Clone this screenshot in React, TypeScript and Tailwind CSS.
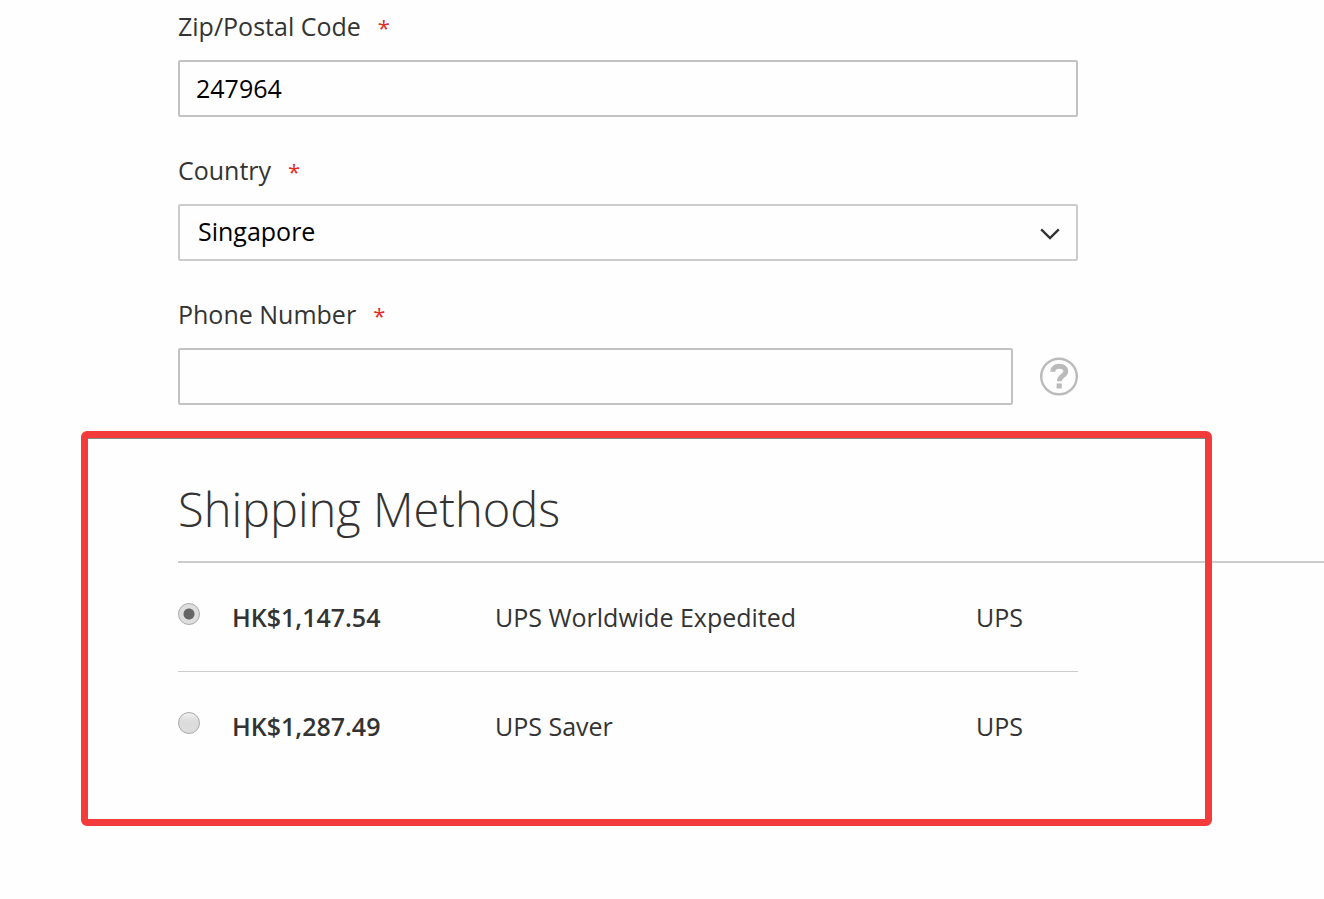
import { useState } from 'react'
import type { ReactNode } from 'react'

interface ShippingMethod {
  id: string
  price: string
  method: string
  carrier: string
}

const METHODS: ShippingMethod[] = [
  { id: 'ups-expedited', price: 'HK$1,147.54', method: 'UPS Worldwide Expedited', carrier: 'UPS' },
  { id: 'ups-saver', price: 'HK$1,287.49', method: 'UPS Saver', carrier: 'UPS' },
]

const COUNTRIES = ['Singapore', 'Hong Kong', 'Malaysia']

const CONTROL = 'block h-[57px] w-full min-w-0 rounded-[2px] border-2 bg-transparent text-[25px] text-black outline-none'

function Field({ id, label, children }: { id: string; label: string; children: ReactNode }) {
  return (
    <div>
      <label htmlFor={id} className="mb-4 flex h-9 items-center gap-[17px]">
        {label}
        <span className="pt-[2px] text-[22px] text-[#e02b27]">*</span>
      </label>
      {children}
    </div>
  )
}

function HelpIcon() {
  return (
    <svg viewBox="0 0 38 38" className="size-[38px] overflow-visible" fill="none" stroke="#bbbbbb" aria-hidden="true">
      <circle cx="19" cy="18.5" r="17.8" strokeWidth="2.4" />
      <path d="M12.6 13.7c.5-4 3-5.5 6.6-5.5 4 0 6.600 1.800 6.600 5 0 4.900-6.400 4.400-6.400 10" strokeWidth="4.9" />
      <path d="M19.2 25.500v4.900" strokeWidth="5.2" />
    </svg>
  )
}

function MethodRow({ item, checked, onSelect }: { item: ShippingMethod; checked: boolean; onSelect: () => void }) {
  return (
    <tr className="h-[109px] *:border-b *:border-[#cccccc] last:h-[108px] last:*:border-b-0">
      <td className="w-[54px] pb-[6px]">
        <input
          id={item.id}
          type="radio"
          name="shipping"
          checked={checked}
          onChange={onSelect}
          className="block size-[22px] appearance-none rounded-full border border-[#a9a9a9] bg-linear-to-b from-[#f0f0f0] to-[#dcdcdc] to-40% checked:bg-[radial-gradient(circle,#666666_5px,#dedede_6px)]"
        />
      </td>
      <td className="w-[263px] font-semibold">
        <label htmlFor={item.id}>{item.price}</label>
      </td>
      <td>{item.method}</td>
      <td className="w-[102px]">{item.carrier}</td>
    </tr>
  )
}

export default function App() {
  const [zip, setZip] = useState('247964')
  const [country, setCountry] = useState('Singapore')
  const [phone, setPhone] = useState('')
  const [selected, setSelected] = useState('ups-expedited')

  return (
    <main className="min-h-screen overflow-x-hidden bg-[#fefefe] pt-2 pl-[178px] font-['Open_Sans',sans-serif] text-[25px] leading-9 text-[#333333]">
      <form className="mr-[246px] flex flex-col gap-[35px]">
        <Field id="zip" label="Zip/Postal Code">
          <input id="zip" value={zip} onChange={(e) => setZip(e.target.value)} className={`${CONTROL} border-[#c2c2c2] px-4 pb-[2px]`} />
        </Field>
        <Field id="country" label="Country">
          <div className="relative">
            <select
              id="country"
              value={country}
              onChange={(e) => setCountry(e.target.value)}
              className={`${CONTROL} appearance-none border-[#cccccc] px-[18px] pb-1`}
            >
              {COUNTRIES.map((c) => (
                <option key={c}>{c}</option>
              ))}
            </select>
            <svg
              viewBox="0 0 20 12"
              className="pointer-events-none absolute top-6 right-[18px] h-3 w-5"
              fill="none"
              stroke="#333333"
              strokeWidth="2.4"
              aria-hidden="true"
            >
              <path d="M1.2 1.4 10 10l8.8-8.6" />
            </svg>
          </div>
        </Field>
        <Field id="phone" label="Phone Number">
          <div className="flex items-center gap-[27px]">
            <input
              id="phone"
              type="tel"
              value={phone}
              onChange={(e) => setPhone(e.target.value)}
              className={`${CONTROL} flex-1 border-[#c2c2c2] px-4 pb-[2px]`}
            />
            <button type="button" aria-label="Help">
              <HelpIcon />
            </button>
          </div>
        </Field>
      </form>

      <section className="relative mt-[26px] pt-[46px] pb-[46px]">
        <h1 className="border-b-2 border-[#cccccc] pb-5 text-[47px] leading-[64px] font-light">Shipping Methods</h1>
        <div className="mr-[246px]">
          <table className="w-full border-separate border-spacing-0 text-left">
            <tbody>
              {METHODS.map((m) => (
                <MethodRow key={m.id} item={m} checked={selected === m.id} onSelect={() => setSelected(m.id)} />
              ))}
            </tbody>
          </table>
        </div>
        {/* highlight frame laid over the section */}
        <div className="pointer-events-none absolute inset-y-0 right-[112px] left-[-97px] rounded-[6px] border-7 border-[#f43b3b] shadow-[inset_0_1px_0_#888888]" />
      </section>
    </main>
  )
}
